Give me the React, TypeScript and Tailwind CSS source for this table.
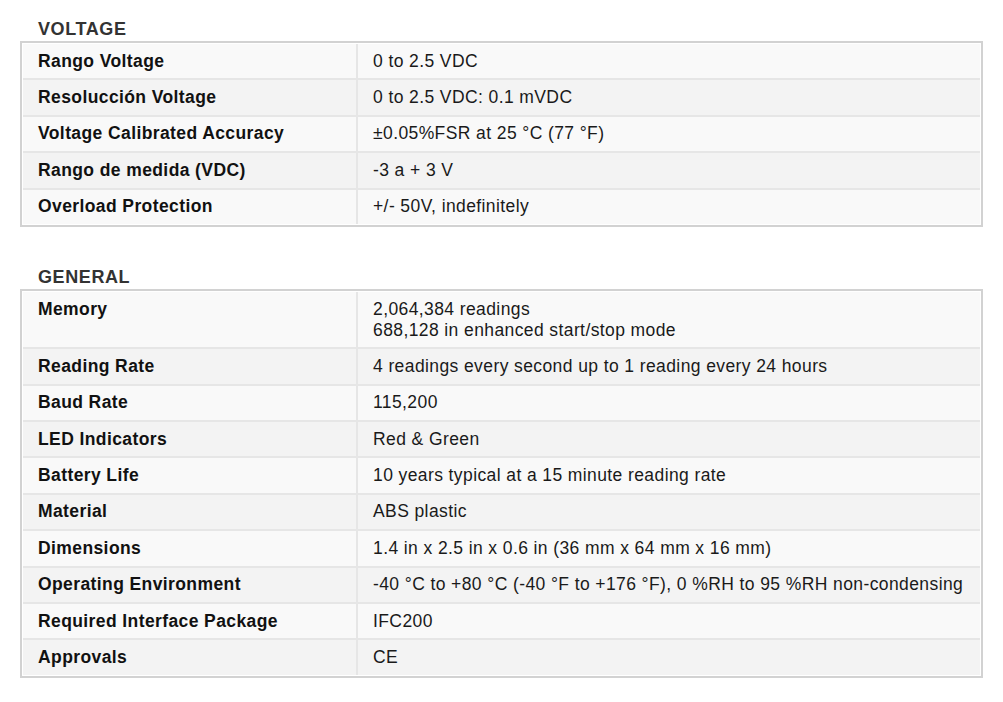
import React from "react";

type Spec = { label: string; value: string[] };

const voltage: Spec[] = [
  { label: "Rango Voltage", value: ["0 to 2.5 VDC"] },
  { label: "Resolucción Voltage", value: ["0 to 2.5 VDC: 0.1 mVDC"] },
  { label: "Voltage Calibrated Accuracy", value: ["±0.05%FSR at 25 °C (77 °F)"] },
  { label: "Rango de medida (VDC)", value: ["-3 a + 3 V"] },
  { label: "Overload Protection", value: ["+/- 50V, indefinitely"] },
];

const general: Spec[] = [
  { label: "Memory", value: ["2,064,384 readings", "688,128 in enhanced start/stop mode"] },
  { label: "Reading Rate", value: ["4 readings every second up to 1 reading every 24 hours"] },
  { label: "Baud Rate", value: ["115,200"] },
  { label: "LED Indicators", value: ["Red & Green"] },
  { label: "Battery Life", value: ["10 years typical at a 15 minute reading rate"] },
  { label: "Material", value: ["ABS plastic"] },
  { label: "Dimensions", value: ["1.4 in x 2.5 in x 0.6 in (36 mm x 64 mm x 16 mm)"] },
  {
    label: "Operating Environment",
    value: ["-40 °C to +80 °C (-40 °F to +176 °F), 0 %RH to 95 %RH non-condensing"],
  },
  { label: "Required Interface Package", value: ["IFC200"] },
  { label: "Approvals", value: ["CE"] },
];

// one section: title + bordered spec table
function SpecTable({ title, rows }: { title: string; rows: Spec[] }) {
  return (
    <section>
      <h2 className="pl-[18px] text-[18px] leading-[20px] font-bold text-[#333] tracking-[0.6px] mb-[2px]">
        {title}
      </h2>
      <div className="border-2 border-[#d2d2d2] bg-white p-px">
        <div className="grid grid-cols-[333px_1fr] gap-[2px] bg-[#e6e6e6]">
          {rows.map((r, i) => {
            const bg = i % 2 === 0 ? "bg-[#f9f9f9]" : "bg-[#f3f3f3]";
            return (
              <React.Fragment key={r.label}>
                <div className={`${bg} px-[15px] py-[6.7px] leading-[21px] font-bold text-[#111]`}>
                  {r.label}
                </div>
                <div className={`${bg} px-[15px] py-[6.7px] leading-[21px] text-[#1a1a1a]`}>
                  {r.value.map((v) => (
                    <div key={v}>{v}</div>
                  ))}
                </div>
              </React.Fragment>
            );
          })}
        </div>
      </div>
    </section>
  );
}

export default function App() {
  return (
    <div
      className="bg-white min-h-[702px] w-[1003px] pt-[19px] pl-[20px] text-[17.5px] tracking-[0.4px]"
      style={{ fontFamily: '"Liberation Sans", Arial, sans-serif' }}
    >
      <div className="w-[963px] flex flex-col gap-[40px]">
        <SpecTable title="VOLTAGE" rows={voltage} />
        <SpecTable title="GENERAL" rows={general} />
      </div>
    </div>
  );
}
